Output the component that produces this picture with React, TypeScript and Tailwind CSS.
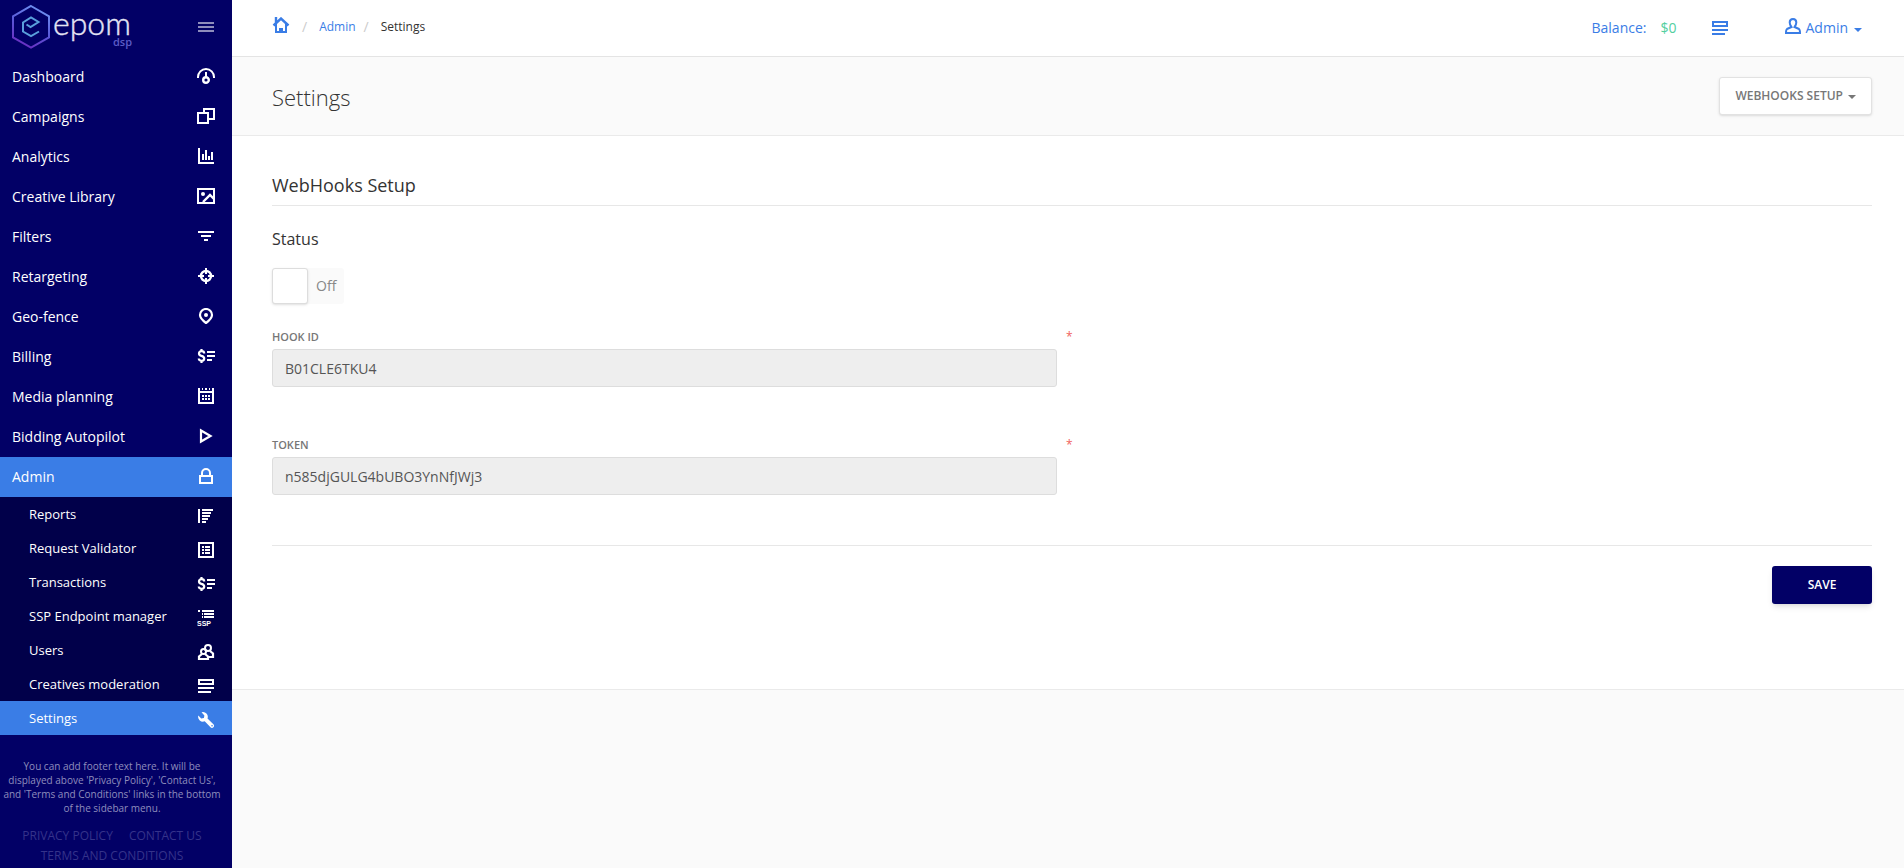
import { useState } from 'react';
import type { ReactNode } from 'react';

function Icon({ children, className = '' }: { children: ReactNode; className?: string }) {
  return (
    <svg
      viewBox="0 0 18 16"
      className={`h-4 w-[18px] shrink-0 ${className}`}
      fill="none"
      stroke="currentColor"
      strokeWidth="2"
      aria-hidden="true"
    >
      {children}
    </svg>
  );
}

const icons: Record<string, ReactNode> = {
  gauge: (
    <>
      <path d="M1 10V9a8 8 0 0 1 16 0v1" />
      <circle cx="9" cy="12" r="2.8" strokeWidth="2.4" />
      <path d="M9 4v6" />
    </>
  ),
  windows: <path d="M1 5h10v10H1zM7 5V1h10v10h-6" />,
  chart: <path d="M2 0v15h15M6 6v6M9 2v10M12 8v4M15 4v8" />,
  image: (
    <>
      <path d="M1 1h16v14H1z" />
      <circle cx="6" cy="6" r="2" fill="currentColor" stroke="none" />
      <path d="M6 14l7-7 4 4" strokeWidth="2.4" />
    </>
  ),
  filter: <path d="M1 4h16M4 8h10M7 12h4" />,
  target: (
    <>
      <circle cx="9" cy="8" r="5" strokeWidth="2.4" />
      <path d="M9 0v6M9 10v6M1 8h6M11 8h6" />
    </>
  ),
  pin: (
    <>
      <path d="M9 15C5 12 3 10 3 7a6 6 0 0 1 12 0c0 3-2 5-6 8z" strokeWidth="2.2" />
      <circle cx="9" cy="7" r="2" fill="currentColor" stroke="none" />
    </>
  ),
  money: (
    <>
      <path
        d="M7.200 5.500C7.200 4 6 3.200 4.500 3.200S2 4 2 5.400c0 1.500.8 2 2.500 2.500 1.900.5 2.700 1.100 2.700 2.600 0 1.500-1.200 2.300-2.700 2.300S1.800 12 1.800 10.500M4.500 1v2M4.500 13v2"
        strokeWidth="2.2"
      />
      <path d="M10 4h8M10 8h8M10 12h5" />
    </>
  ),
  calendar: (
    <>
      <path d="M2 0v15h14V0M2 4h14M5 1h1M8 1h2M12 1h1" />
      <path d="M5 8h2M8 8h2M11 8h2M5 11h2M8 11h2M11 11h2" />
    </>
  ),
  play: <path d="M4 2.500v11L13.500 8z" strokeWidth="2.2" />,
  lock: (
    <>
      <path d="M3 8h12v7H3z" />
      <path d="M5 8V5a4 4 0 0 1 8 0v3" />
    </>
  ),
  report: <path d="M2 1v14M5 2h11M5 5h9M5 8h8M5 11h6M5 14h4" />,
  table: (
    <>
      <path d="M2 1h14v14H2z" />
      <path d="M5 5h2M8 5h5M5 8h2M8 8h5M5 11h2M8 11h5" />
    </>
  ),
  ssp: (
    <>
      <path d="M1 1h2M5 1h12M7 4h10M7 7h10M5 4h1M5 7h1" />
      <text
        x="0"
        y="16"
        stroke="none"
        fill="currentColor"
        fontSize="7"
        fontWeight="700"
        fontFamily="Liberation Sans, sans-serif"
      >
        SSP
      </text>
    </>
  ),
  users: (
    <>
      <circle cx="11" cy="4" r="3" />
      <circle cx="6.500" cy="7.500" r="2.500" />
      <path d="M5 10l-3 2.500V15h9v-2.500L8 10M13 7l3 2.500V13h-5" strokeWidth="2.200" />
    </>
  ),
  list: <path d="M2 2h14v4H2zM1 10h16M1 14h13" strokeWidth="2" />,
  wrench: (
    <path
      fillRule="evenodd"
      d="M4.500.3a4.800 4.800 0 0 1 6 6.200l5.900 5.800a2 2 0 0 1-2.900 2.900L7.700 9.300A4.800 4.800 0 0 1 1.300 3.600l2.900 2.900 2.700-.4.500-2.700zM15 13a.8.8 0 1 0 .1 1.600A.8.8 0 0 0 15 13z"
      fill="currentColor"
      stroke="none"
    />
  ),
};

const mainItems = [
  ['Dashboard', 'gauge'],
  ['Campaigns', 'windows'],
  ['Analytics', 'chart'],
  ['Creative Library', 'image'],
  ['Filters', 'filter'],
  ['Retargeting', 'target'],
  ['Geo-fence', 'pin'],
  ['Billing', 'money'],
  ['Media planning', 'calendar'],
  ['Bidding Autopilot', 'play'],
  ['Admin', 'lock'],
];

const adminItems = [
  ['Reports', 'report'],
  ['Request Validator', 'table'],
  ['Transactions', 'money'],
  ['SSP Endpoint manager', 'ssp'],
  ['Users', 'users'],
  ['Creatives moderation', 'list'],
  ['Settings', 'wrench'],
];

function Logo() {
  return (
    <svg viewBox="0 0 124 48" className="h-12 w-[124px]" role="img" aria-label="epom dsp">
      <defs>
        <linearGradient id="hex" x1="0.7" y1="0" x2="0.3" y2="1">
          <stop offset="0" stopColor="#6f93f2" />
          <stop offset="0.5" stopColor="#5a5ad8" />
          <stop offset="1" stopColor="#6a2cc0" />
        </linearGradient>
      </defs>
      <path d="M19 4l18 10.300v21L19 45.500 1 35.300v-21z" fill="none" stroke="url(#hex)" strokeWidth="2" />
      <path
        d="M14.500 22.500l4 2.500 8-5-7.500-4.500-8 5v9l8 4.500 8-4.500"
        fill="none"
        stroke="#5aa0dc"
        strokeWidth="2"
      />
      <text x="41" y="33" fontSize="32" fontFamily="Lato, sans-serif" fontWeight="300" fill="#e4e4f4" stroke="#e4e4f4" strokeWidth="0.4">
        epom
      </text>
      <text x="101" y="44" fontSize="11" fontWeight="600" fontFamily="Open Sans, sans-serif" fill="#5c5cc6">
        dsp
      </text>
    </svg>
  );
}

function Caret() {
  return <span className="inline-block border-x-4 border-t-4 border-x-transparent border-t-current" />;
}

function Sidebar() {
  return (
    <aside className="w-[232px] shrink-0 bg-[#020066] text-white">
      <div className="flex h-[57px] items-start justify-between pt-0.5 pr-[17px] pl-3">
        <a href="#home">
          <Logo />
        </a>
        <button type="button" aria-label="Toggle menu" className="pt-5 text-[#8e8dbc]">
          <svg viewBox="0 0 18 10" className="h-2.5 w-[18px]" stroke="currentColor" strokeWidth="2">
            <path d="M1 1h16M1 5h16M1 9h16" />
          </svg>
        </button>
      </div>
      <nav>
        <ul>
          {mainItems.map(([label, icon]) => (
            <li key={label}>
              <a
                href={`#${icon}`}
                className={`flex h-10 items-center justify-between pr-[17px] pl-3 text-sm ${
                  label === 'Admin' ? 'bg-[#3a7de6]' : ''
                }`}
              >
                {label}
                <span className="pb-0.5">
                  <Icon>{icons[icon]}</Icon>
                </span>
              </a>
            </li>
          ))}
        </ul>
        <ul className="bg-[#01004a]">
          {adminItems.map(([label, icon]) => (
            <li key={label}>
              <a
                href={`#${icon}`}
                className={`flex h-[34px] items-center justify-between pt-0.5 pr-[17px] pl-[29px] text-[13px] ${
                  label === 'Settings' ? 'bg-[#3a7de6]' : ''
                }`}
              >
                {label}
                <span className="pt-0.5">
                  <Icon>{icons[icon]}</Icon>
                </span>
              </a>
            </li>
          ))}
        </ul>
      </nav>
      <footer className="mr-2 pt-6 text-center">
        <p className="text-[10px] leading-[14px] font-medium whitespace-nowrap text-[#8f8ebd]">
          You can add footer text here. It will be
          <br />
          displayed above 'Privacy Policy', 'Contact Us',
          <br />
          and 'Terms and Conditions' links in the bottom
          <br />
          of the sidebar menu.
        </p>
        <div className="flex flex-wrap justify-center gap-x-4 px-4 pt-[11px] text-xs leading-5 text-[#35338a]">
          <a href="#privacy">PRIVACY POLICY</a>
          <a href="#contact">CONTACT US</a>
          <a href="#terms">TERMS AND CONDITIONS</a>
        </div>
      </footer>
    </aside>
  );
}

function Field({ id, label, value }: { id: string; label: string; value: string }) {
  return (
    <div className="flex gap-[10px]">
      <div className="w-1/2 pr-[15px]">
        <label htmlFor={id} className="block h-5 text-[11px] leading-4 font-semibold text-[#777]">
          {label}
        </label>
        <input
          id={id}
          readOnly
          defaultValue={value}
          className="block h-[38px] w-full rounded-[3px] border border-[#ddd] bg-[#eee] px-3 text-sm text-[#555] outline-none"
        />
      </div>
      <span className="-ml-4 text-xs leading-4 text-[#f0625d]">*</span>
    </div>
  );
}

export default function App() {
  const [on, setOn] = useState(false);
  return (
    <div className="flex h-screen overflow-hidden bg-[#fafafa] font-['Open_Sans',sans-serif] text-[#333]">
      <Sidebar />
      <div className="min-w-0 flex-1">
        <header className="flex h-[57px] items-center justify-between border-b border-[#e4e4e4] bg-white pr-[42px] pl-10">
          <nav aria-label="Breadcrumb" className="flex items-center pb-0.5 text-xs">
            <a href="#home" aria-label="Home" className="pb-1 text-[#3a7de6]">
              <Icon>
                <path d="M4 7v8h10V7" />
                <path d="M1.500 8.500L9 1.500l7.500 7M4 0v6" strokeWidth="2.400" />
                <path d="M7 15v-4h4v4z" fill="currentColor" stroke="none" />
              </Icon>
            </a>
            <span className="px-3 text-sm text-[#ccc]">/</span>
            <a href="#admin" className="text-[#3a7de6]">
              Admin
            </a>
            <span className="pr-3 pl-2 text-sm text-[#ccc]">/</span>
            <span>Settings</span>
          </nav>
          <div className="flex items-center text-sm text-[#3a7de6]">
            <span>Balance:</span>
            <span className="pl-3.5 text-[#53cfa0]">$0</span>
            <button type="button" aria-label="Messages" className="pl-[34px]">
              <Icon>{icons.list}</Icon>
            </button>
            <button type="button" className="flex items-center gap-1 pl-[55px]">
              <span className="pb-1">
                <Icon>
                  <path d="M9 1c-2.500 0-3.300 1.600-3.300 3.500 0 2 .8 3 1.800 4.500L3 11c-1 .6-1 2-1 4h14c0-2 0-3.400-1-4l-4.500-2c1-1.500 1.800-2.500 1.800-4.500C12.300 2.600 11.500 1 9 1z" />
                </Icon>
              </span>
              Admin
              <span className="flex pt-1 pl-0.5">
                <Caret />
              </span>
            </button>
          </div>
        </header>

        <div className="flex h-[79px] items-center justify-between border-b border-[#eaeaea] pr-8 pl-10">
          <h1 className="pt-0.5 text-[22px] font-light">Settings</h1>
          <button
            type="button"
            className="flex h-[38px] items-center gap-[5px] rounded-[3px] border border-[#e2e2e2] bg-white px-[15px] text-xs font-semibold text-[#777] shadow-sm"
          >
            WEBHOOKS SETUP
            <span className="flex pt-0.5">
              <Caret />
            </span>
          </button>
        </div>

        <main className="border-b border-[#eaeaea] bg-white pt-[35px] pr-8 pb-[85px] pl-10">
          <h2 className="border-b border-[#e7e7e7] pb-1.5 text-lg leading-7">WebHooks Setup</h2>
          <h3 className="pt-[21px] text-base leading-6">Status</h3>
          <label className="mt-[17px] flex h-9 w-18 cursor-pointer items-center rounded-[3px] bg-[#fafafa] text-sm text-[#888]">
            <input
              type="checkbox"
              checked={on}
              onChange={(e) => setOn(e.target.checked)}
              className="mr-2 h-9 w-9 appearance-none rounded-[3px] border border-[#ddd] bg-white shadow-sm"
            />
            {on ? 'On' : 'Off'}
          </label>
          <form onSubmit={(e) => e.preventDefault()} className="pt-[25px]">
            <Field id="hook-id" label="HOOK ID" value="B01CLE6TKU4" />
            <div className="pt-[50px] pb-[50px]">
              <Field id="token" label="TOKEN" value="n585djGULG4bUBO3YnNfJWj3" />
            </div>
            <div className="flex justify-end border-t border-[#e7e7e7] pt-5">
              <button
                type="submit"
                className="h-[38px] w-25 rounded-[3px] bg-[#020066] text-xs font-semibold text-white shadow-md"
              >
                SAVE
              </button>
            </div>
          </form>
        </main>
      </div>
    </div>
  );
}
